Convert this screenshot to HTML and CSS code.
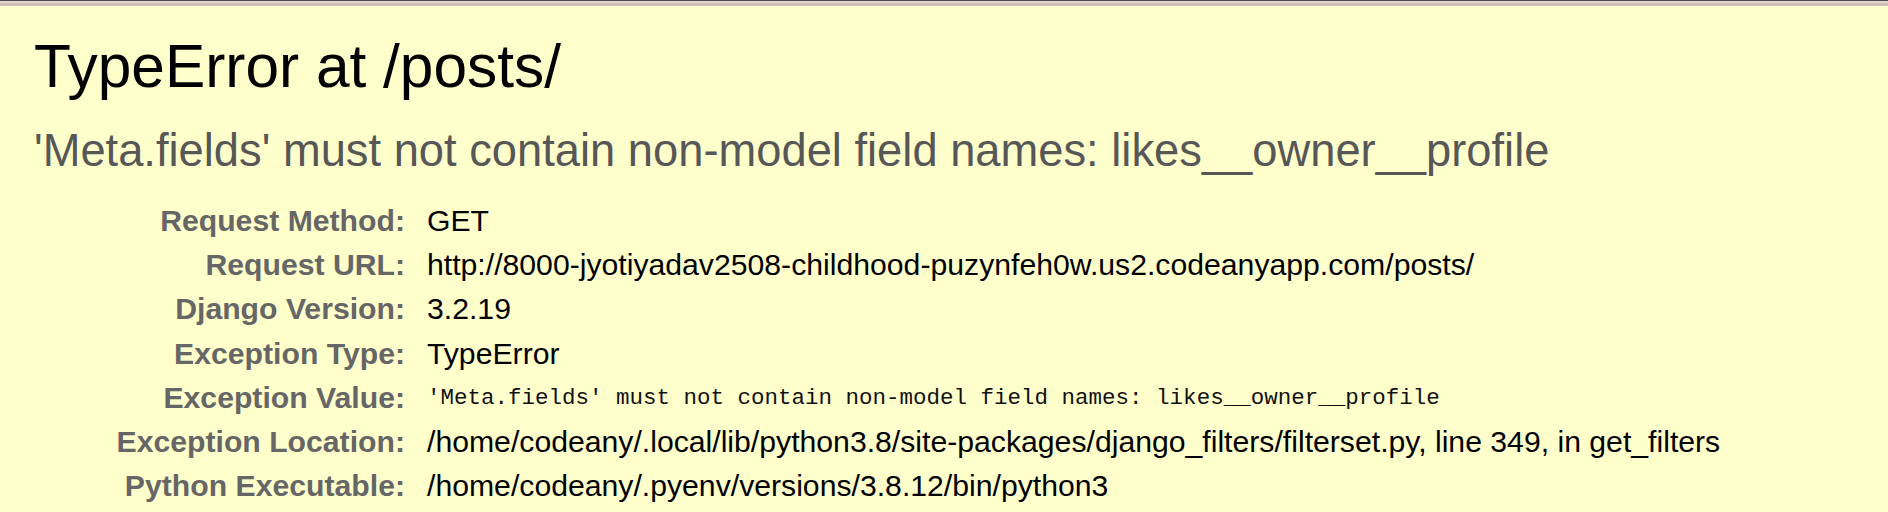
FILE: index.html
```html
<!DOCTYPE html>
<html lang="en">
<head>
<meta charset="utf-8">
<title>TypeError at /posts/</title>
<link rel="stylesheet" href="styles.css">
</head>
<body>
<div class="chrome"><div class="c1"></div><div class="c2"></div><div class="c3"></div></div>
<div class="summary">
  <h1 class="title">TypeError at /posts/</h1>
  <pre class="exception-value">'Meta.fields' must not contain non-model field names: likes__owner__profile</pre>
  <table class="meta">
    <tbody>
      <tr><th>Request Method:</th><td>GET</td></tr>
      <tr><th>Request URL:</th><td>http://8000-jyotiyadav2508-childhood-puzynfeh0w.us2.codeanyapp.com/posts/</td></tr>
      <tr><th>Django Version:</th><td>3.2.19</td></tr>
      <tr><th>Exception Type:</th><td>TypeError</td></tr>
      <tr><th>Exception Value:</th><td><pre class="mono">'Meta.fields' must not contain non-model field names: likes__owner__profile</pre></td></tr>
      <tr><th>Exception Location:</th><td>/home/codeany/.local/lib/python3.8/site-packages/django_filters/filterset.py, line 349, in get_filters</td></tr>
      <tr><th>Python Executable:</th><td>/home/codeany/.pyenv/versions/3.8.12/bin/python3</td></tr>
    </tbody>
  </table>
</div>
</body>
</html>
```

FILE: styles.css
```css
html, body {
  margin: 0;
  padding: 0;
  background: #ffffcc;
  height: 100%;
  overflow: hidden;
}
body {
  font-family: "Liberation Sans", Arial, sans-serif;
  color: #000;
}
.chrome .c1 { height: 1px; background: #4f4a47; }
.chrome .c2 { height: 2px; background: #e4d6cf; }
.chrome .c3 { height: 3px; background: #cdbfb8; }

.summary {
  padding: 27px 40px 0 34px;
}
.title {
  margin: 0;
  font-weight: normal;
  font-size: 60.4px;
  line-height: 66px;
}
.exception-value {
  margin: 27px 0 0 0;
  font-family: "Liberation Sans", Arial, sans-serif;
  font-size: 45.3px;
  line-height: 49px;
  color: #575757;
  white-space: pre-wrap;
}
.meta {
  margin-top: 24px;
  border-collapse: collapse;
  width: 100%;
}
.meta th,
.meta td {
  vertical-align: top;
  font-size: 30.2px;
  line-height: 34.2px;
  padding: 5px 0;
  white-space: nowrap;
}
.meta th {
  width: 364px;
  padding-left: 7px;
  padding-right: 15px;
  text-align: right;
  color: #666;
  font-weight: bold;
}
.meta td {
  padding-left: 7px;
  text-align: left;
}
.mono {
  margin: 0;
  font-family: "Liberation Mono", "DejaVu Sans Mono", monospace;
  font-size: 22.5px;
  line-height: 34.2px;
  color: #111;
}
```
